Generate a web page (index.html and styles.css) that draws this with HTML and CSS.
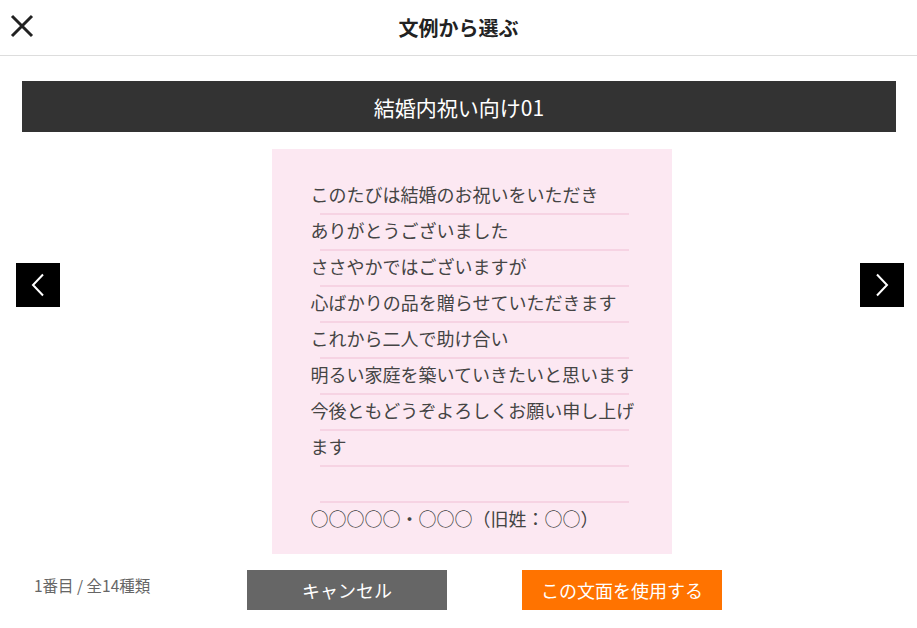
FILE: index.html
```html
<!DOCTYPE html>
<html lang="ja">
<head>
  <meta charset="utf-8">
  <title>文例から選ぶ</title>
  <meta name="viewport" content="width=device-width, initial-scale=1">
  <link rel="stylesheet" href="styles.css">
</head>
<body>

  <header class="head">
    <button class="close" type="button" aria-label="閉じる">
      <svg width="24" height="24" viewBox="0 0 24 24"><path d="M2 2 L22 22 M22 2 L2 22" stroke="#222" stroke-width="3" fill="none"/></svg>
    </button>
    <h1>文例から選ぶ</h1>
  </header>

  <div class="title-bar">結婚内祝い向け01</div>

  <section class="viewer">
    <button class="arrow" type="button" aria-label="前へ">
      <svg width="14" height="24" viewBox="0 0 14 24"><path d="M12 1.5 L2 12 L12 22.5" stroke="#fff" stroke-width="2" fill="none"/></svg>
    </button>
    <div class="stage">
      <div class="card">
        <div class="row">このたびは結婚のお祝いをいただき</div>
        <div class="row">ありがとうございました</div>
        <div class="row">ささやかではございますが</div>
        <div class="row">心ばかりの品を贈らせていただきます</div>
        <div class="row">これから二人で助け合い</div>
        <div class="row">明るい家庭を築いていきたいと思います</div>
        <div class="row">今後ともどうぞよろしくお願い申し上げ</div>
        <div class="row">ます</div>
        <div class="row">&nbsp;</div>
        <div class="row last">○○○○○・○○○（旧姓：○○）</div>
      </div>
    </div>
    <button class="arrow" type="button" aria-label="次へ">
      <svg width="14" height="24" viewBox="0 0 14 24"><path d="M2 1.5 L12 12 L2 22.5" stroke="#fff" stroke-width="2" fill="none"/></svg>
    </button>
  </section>

  <footer class="foot">
    <p class="count">1番目 / 全14種類</p>
    <button class="btn cancel" type="button">キャンセル</button>
    <button class="btn use" type="button">この文面を使用する</button>
  </footer>

</body>
</html>
```

FILE: styles.css
```css
body {
  margin: 0;
  background: #fff;
  font-family: "Noto Sans CJK JP", "Noto Sans", sans-serif;
  color: #333;
}
button {
  font-family: inherit;
  border: none;
  cursor: pointer;
}
.head {
  height: 55px;
  border-bottom: 1px solid #ddd;
  display: flex;
  align-items: center;
  justify-content: center;
  position: relative;
}
.head > h1 {
  margin: 0;
  font-size: 20px;
  font-weight: bold;
  color: #222;
}
.close {
  position: absolute;
  left: 10px;
  top: 14px;
  padding: 0;
  background: none;
  line-height: 0;
}
.title-bar {
  margin: 25px 21px 0 22px;
  height: 51px;
  background: #333;
  color: #fff;
  font-size: 21px;
  display: flex;
  align-items: center;
  justify-content: center;
}
.viewer {
  display: flex;
  align-items: flex-start;
  padding: 17px 13px 0 16px;
}
.arrow {
  width: 44px;
  height: 44px;
  margin-top: 114px;
  background: #000;
  display: flex;
  align-items: center;
  justify-content: center;
  padding: 0;
}
.stage {
  flex: 1;
  display: flex;
  justify-content: center;
  padding-left: 23px;
}
.card {
  width: 322px;
  padding: 28px 39px 19px 39px;
  background: #fce8f2;
  font-size: 18px;
  color: #444;
}
.row {
  line-height: 34px;
  white-space: nowrap;
  margin-bottom: -2px;
}
.row::after {
  content: "";
  display: block;
  height: 2px;
  margin: 2px 4px 0 9px;
  background: #f6d3e3;
}
.row.last {
  margin-bottom: 0;
}
.row.last::after {
  display: none;
}
.foot {
  display: flex;
  align-items: flex-start;
  padding: 16px 0 0 34px;
}
.count {
  width: 213px;
  margin: 5px 0 0;
  font-size: 15.5px;
  line-height: 20px;
  color: #666;
}
.btn {
  width: 200px;
  height: 40px;
  color: #fff;
  font-size: 18px;
}
.cancel {
  background: #666;
  margin-right: 75px;
}
.use {
  background: #ff7300;
}
```
